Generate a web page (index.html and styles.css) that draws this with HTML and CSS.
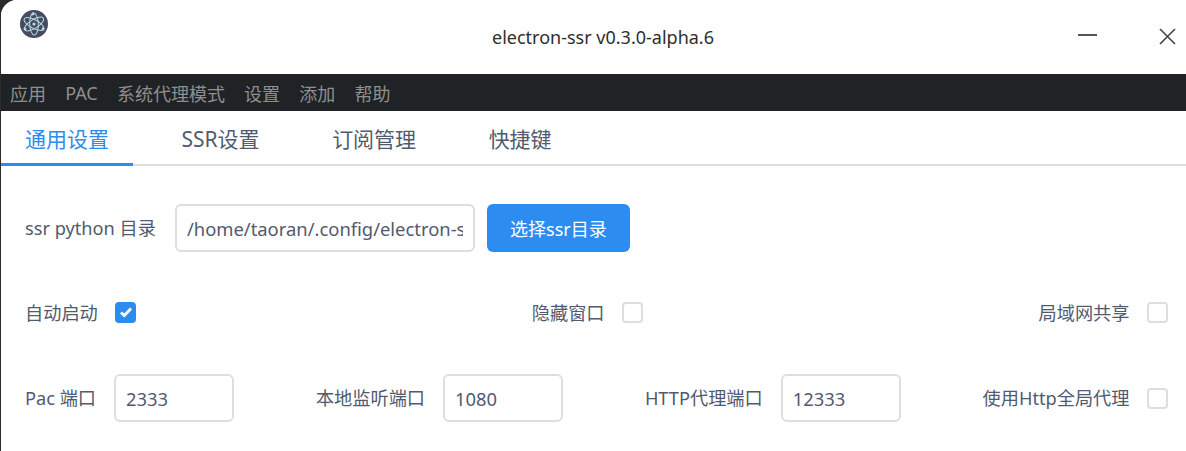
FILE: index.html
```html
<!DOCTYPE html>
<html lang="zh-CN">

<head>
    <meta charset="UTF-8">
    <meta name="viewport" content="width=device-width, initial-scale=1.0">
    <title>electron-ssr v0.3.0-alpha.6</title>
    <link rel="stylesheet" href="styles.css">
</head>

<body>
    <div class="janela">
        <header class="titulo">
            <svg class="logo" width="30" height="30" viewBox="0 0 30 30">
                <circle cx="15" cy="15" r="14" fill="#474b5f" />
                <g fill="none" stroke="#b5dbe6" stroke-width="1">
                    <ellipse cx="15" cy="15" rx="11" ry="4.3" transform="rotate(28 15 15)" />
                    <ellipse cx="15" cy="15" rx="11" ry="4.3" transform="rotate(-32 15 15)" />
                    <ellipse cx="15" cy="15" rx="11" ry="4.3" transform="rotate(88 15 15)" />
                </g>
                <circle cx="15" cy="15" r="1.6" fill="#b5dbe6" />
                <circle cx="14" cy="5" r="1.4" fill="#b5dbe6" />
                <circle cx="6" cy="20" r="1.4" fill="#b5dbe6" />
                <circle cx="24" cy="20" r="1.4" fill="#b5dbe6" />
            </svg>
            <span class="nome">electron-ssr v0.3.0-alpha.6</span>
            <svg class="minimizar" width="20" height="4" viewBox="0 0 20 4">
                <rect x="0" y="1" width="19" height="2" fill="#555" />
            </svg>
            <svg class="fechar" width="18" height="18" viewBox="0 0 18 18">
                <path d="M2 2L17 17M17 2L2 17" stroke="#444" stroke-width="1.6" fill="none" />
            </svg>
        </header>

        <nav class="menu">
            <span>应用</span>
            <span>PAC</span>
            <span>系统代理模式</span>
            <span>设置</span>
            <span>添加</span>
            <span>帮助</span>
        </nav>

        <div class="abas">
            <div class="aba ativa">通用设置</div>
            <div class="aba">SSR设置</div>
            <div class="aba">订阅管理</div>
            <div class="aba">快捷键</div>
        </div>

        <main class="conteudo">
            <div class="linha-dir">
                <label class="rotulo">ssr python 目录</label>
                <input class="campo campo-dir" type="text" value="/home/taoran/.config/electron-ssr/shadowsocksr">
                <button class="botao">选择ssr目录</button>
            </div>

            <div class="linha linha-check">
                <div class="item">
                    <label class="rotulo">自动启动</label>
                    <span class="check marcado">
                        <svg width="14" height="12" viewBox="0 0 14 12">
                            <path d="M2 6.5L5.3 9.5L12 2.5" stroke="#fff" stroke-width="3" fill="none" />
                        </svg>
                    </span>
                </div>
                <div class="item">
                    <label class="rotulo">隐藏窗口</label>
                    <span class="check"></span>
                </div>
                <div class="item">
                    <label class="rotulo">局域网共享</label>
                    <span class="check"></span>
                </div>
            </div>

            <div class="linha linha-porta">
                <div class="item">
                    <label class="rotulo">Pac 端口</label>
                    <input class="campo campo-porta" type="text" value="2333">
                </div>
                <div class="item">
                    <label class="rotulo">本地监听端口</label>
                    <input class="campo campo-porta" type="text" value="1080">
                </div>
                <div class="item">
                    <label class="rotulo">HTTP代理端口</label>
                    <input class="campo campo-porta" type="text" value="12333">
                </div>
                <div class="item">
                    <label class="rotulo">使用Http全局代理</label>
                    <span class="check"></span>
                </div>
            </div>
        </main>
    </div>
</body>
</html>
```

FILE: styles.css
```css
* {
    box-sizing: border-box;
}

html,
body {
    margin: 0;
    height: 100%;
    overflow: hidden;
    background-color: #2b2b2b;
}

body {
    font-family: "Noto Sans", "Noto Sans CJK SC", sans-serif;
}

.janela {
    height: 451px;
    margin-left: 1px;
    background-color: #ffffff;
    border-top-left-radius: 16px;
    overflow: hidden;
}

.titulo {
    height: 74px;
    position: relative;
    display: flex;
    justify-content: center;
    padding-top: 24px;
    background-color: #ffffff;
}

.logo {
    position: absolute;
    left: 18px;
    top: 9px;
}

.nome {
    font-size: 18px;
    line-height: 26px;
    color: #2e2e2e;
    margin-left: 19px;
}

.minimizar {
    position: absolute;
    left: 1077px;
    top: 33px;
}

.fechar {
    position: absolute;
    left: 1157px;
    top: 27px;
}

.menu {
    height: 37px;
    display: flex;
    align-items: center;
    gap: 19.2px;
    padding-left: 9px;
    background-color: #1f2326;
    color: #8f8f8f;
    font-size: 18px;
}

.abas {
    height: 55px;
    display: flex;
    gap: 24.5px;
    border-bottom: 2px solid #dddee1;
}

.aba {
    height: 55px;
    padding: 0 24px;
    font-size: 21px;
    line-height: 56px;
    color: #515a6e;
}

.ativa {
    color: #2d8cf0;
    border-bottom: 3px solid #2d8cf0;
}

.conteudo {
    padding: 38px 18px 0 24px;
}

.linha-dir {
    display: flex;
    align-items: center;
    height: 48px;
}

.linha {
    display: flex;
    justify-content: space-between;
    align-items: center;
    height: 48px;
}

.linha-check {
    margin-top: 36px;
    margin-bottom: 38px;
}

.item {
    display: flex;
    align-items: center;
}

.rotulo {
    font-size: 18.2px;
    color: #515a6e;
    white-space: nowrap;
}

.linha-dir .rotulo,
.linha-porta .rotulo {
    margin-bottom: 3px;
}

.campo {
    height: 48px;
    border: 2px solid #dddee1;
    border-radius: 6px;
    padding: 0 10px;
    font-family: inherit;
    font-size: 18.4px;
    color: #515a6e;
    outline: none;
    background-color: #ffffff;
}

.campo-dir {
    width: 300px;
    margin-left: 19px;
}

.campo-porta {
    width: 120px;
    margin-left: 18px;
}

.botao {
    width: 143px;
    height: 48px;
    margin-left: 12px;
    border: 0;
    border-radius: 6px;
    background-color: #2d8cf0;
    color: #ffffff;
    font-family: inherit;
    font-size: 18px;
}

.check {
    width: 21px;
    height: 21px;
    margin-left: 17.5px;
    border: 2px solid #dddee1;
    border-radius: 4px;
    background-color: #ffffff;
    display: flex;
    align-items: center;
    justify-content: center;
}

.marcado {
    background-color: #2d8cf0;
    border-color: #2d8cf0;
}
```
